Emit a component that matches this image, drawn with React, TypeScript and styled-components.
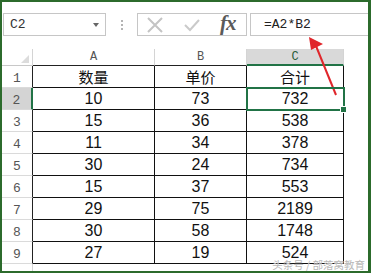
import React from "react";
import styled, { createGlobalStyle } from "styled-components";

const green = "#217346";
const frameGreen = "#2c6b2c";

const GlobalStyle = createGlobalStyle`
  html, body {
    margin: 0;
    padding: 0;
    background: #fff;
  }
  body {
    font-family: "Liberation Sans", "Noto Sans CJK SC", sans-serif;
  }
`;

const rows = [
  ["10", "73", "732"],
  ["15", "36", "538"],
  ["11", "34", "378"],
  ["30", "24", "734"],
  ["15", "37", "553"],
  ["29", "75", "2189"],
  ["30", "58", "1748"],
  ["27", "19", "524"]
];

export default function App() {
  return (
    <>
      <GlobalStyle />
      <Frame>
        <Toolbar>
          <NameBox>
            <span>C2</span>
            <DropArrow />
          </NameBox>
          <Dots>
            <i />
            <i />
            <i />
          </Dots>
          <ActionBox>
            <svg width="18" height="16" viewBox="0 0 18 16">
              <path d="M2 1 L16 15 M16 1 L2 15" stroke="#c4c4c4" strokeWidth="2" fill="none" />
            </svg>
            <svg width="16" height="14" viewBox="0 0 16 14">
              <path d="M1 7 L6 12 L15 2" stroke="#cacaca" strokeWidth="2" fill="none" />
            </svg>
            <Fx>fx</Fx>
          </ActionBox>
          <FormulaBox>=A2*B2</FormulaBox>
        </Toolbar>

        <Sheet>
          <Corner />
          <ColHead>A</ColHead>
          <ColHead>B</ColHead>
          <ColHead $active>C</ColHead>
          <Blank />

          <RowHead $table>1</RowHead>
          <Cell $cn>数量</Cell>
          <Cell $cn>单价</Cell>
          <Cell $cn>合计</Cell>
          <Blank />

          {rows.map((r, i) => (
            <React.Fragment key={i}>
              <RowHead $table $active={i === 0}>
                {i + 2}
              </RowHead>
              <Cell>{r[0]}</Cell>
              <Cell>{r[1]}</Cell>
              <Cell $selected={i === 0}>{r[2]}</Cell>
              <Blank />
            </React.Fragment>
          ))}

          <RowHead>10</RowHead>
          <Blank />
          <Blank />
          <Blank />
          <Blank />
        </Sheet>

        <Arrow width="371" height="273" viewBox="0 0 371 273">
          <line x1="336" y1="95" x2="316" y2="46" stroke="#e0262b" strokeWidth="2" />
          <polygon points="309,37 323,44 311,50" fill="#e0262b" />
        </Arrow>
        <Watermark>头条号 / 部落窝教育</Watermark>
      </Frame>
    </>
  );
}

const Frame = styled.div`
  position: relative;
  box-sizing: border-box;
  width: 371px;
  height: 273px;
  border-style: solid;
  border-color: ${frameGreen};
  border-width: 2px 3px 2px 2px;
  overflow: hidden;
  background: #fff;
`;

const Toolbar = styled.div`
  display: flex;
  align-items: stretch;
  height: 45px;
  box-sizing: border-box;
  padding: 11px 0 11px 1px;
`;

const NameBox = styled.div`
  box-sizing: border-box;
  width: 103px;
  border: 1px solid #c6c6c6;
  display: flex;
  align-items: center;
  justify-content: space-between;
  padding: 0 6px 0 6px;
  font-family: "Liberation Mono", monospace;
  font-size: 13px;
  color: #333;
`;

const DropArrow = styled.span`
  width: 0;
  height: 0;
  border-left: 3.5px solid transparent;
  border-right: 3.5px solid transparent;
  border-top: 4px solid #666;
  margin-top: 1px;
`;

const Dots = styled.div`
  width: 31px;
  display: flex;
  flex-direction: column;
  align-items: center;
  justify-content: center;
  gap: 2px;
  i {
    display: block;
    width: 2px;
    height: 2px;
    background: #b4b4b4;
  }
`;

const ActionBox = styled.div`
  box-sizing: border-box;
  width: 110px;
  border: 1px solid #c6c6c6;
  display: flex;
  align-items: center;
  gap: 0;
  padding-left: 8px;
  svg:nth-child(1) {
    margin-right: 20px;
  }
  svg:nth-child(2) {
    margin-right: 20px;
  }
`;

const Fx = styled.span`
  font-family: "Liberation Serif", serif;
  font-style: italic;
  font-weight: bold;
  font-size: 21px;
  color: #5a5a5a;
  letter-spacing: -1px;
  margin-top: -2px;
`;

const FormulaBox = styled.div`
  flex: 1;
  margin-left: 3px;
  box-sizing: border-box;
  border: 1px solid #c6c6c6;
  border-right: none;
  display: flex;
  align-items: center;
  padding-left: 13px;
  font-family: "Liberation Mono", monospace;
  font-size: 13px;
  color: #222;
`;

const Sheet = styled.div`
  display: grid;
  grid-template-columns: 31px 122px 92px 97px 1fr;
  grid-template-rows: 17px repeat(10, 22px);
  margin-top: 2px;
`;

const Corner = styled.div`
  position: relative;
  box-sizing: border-box;
  border-right: 1px solid #d4d4d4;
  border-bottom: 1px solid #c8c8c8;
  &::after {
    content: "";
    position: absolute;
    right: 3px;
    bottom: 2px;
    width: 0;
    height: 0;
    border-left: 8px solid transparent;
    border-bottom: 8px solid #dcdcdc;
  }
`;

const ColHead = styled.div<{ $active?: boolean }>`
  box-sizing: border-box;
  display: flex;
  align-items: flex-end;
  justify-content: center;
  border-right: 1px solid #d4d4d4;
  border-bottom: ${(p) => (p.$active ? `2px solid ${green}` : "1px solid #222")};
  background: ${(p) => (p.$active ? "#d9d9d9" : "#fff")};
  font-family: "Liberation Mono", monospace;
  font-size: 12px;
  line-height: 13px;
  color: ${(p) => (p.$active ? "#2b5d3a" : "#555")};
  padding-bottom: ${(p) => (p.$active ? "0" : "1px")};
`;

const RowHead = styled.div<{ $active?: boolean; $table?: boolean }>`
  box-sizing: border-box;
  display: flex;
  align-items: flex-end;
  justify-content: center;
  padding-bottom: 1px;
  border-right: ${(p) =>
    p.$active ? `2px solid ${green}` : p.$table ? "1px solid #222" : "1px solid #d4d4d4"};
  border-bottom: 1px solid #dadada;
  background: ${(p) => (p.$active ? "#d4d4d4" : "#fff")};
  font-family: "Liberation Mono", monospace;
  font-size: 13px;
  line-height: 14px;
  color: #555;
`;

const Cell = styled.div<{ $cn?: boolean; $selected?: boolean }>`
  position: relative;
  box-sizing: border-box;
  display: flex;
  align-items: center;
  justify-content: center;
  border-right: 1px solid #111;
  border-bottom: 1px solid #111;
  font-family: ${(p) =>
    p.$cn ? `"Noto Sans CJK SC", sans-serif` : `"Liberation Sans", sans-serif`};
  font-size: ${(p) => (p.$cn ? "15px" : "16px")};
  line-height: 22px;
  padding-top: ${(p) => (p.$cn ? "0" : "1px")};
  color: #111;
  ${(p) =>
    p.$selected &&
    `
    z-index: 1;
    outline: 2px solid ${green};
    outline-offset: -1px;
    &::after {
      content: "";
      position: absolute;
      right: -4px;
      bottom: -4px;
      width: 5px;
      height: 5px;
      background: ${green};
      border: 1px solid #fff;
    }
  `}
`;

const Blank = styled.div`
  background: #fff;
`;

const Arrow = styled.svg`
  position: absolute;
  left: -2px;
  top: -2px;
  pointer-events: none;
`;

const Watermark = styled.div`
  position: absolute;
  right: 3px;
  bottom: 0px;
  font-family: "Noto Sans CJK SC", sans-serif;
  font-size: 10.5px;
  line-height: 13px;
  color: #b8b8b8;
  text-shadow: 0 0 1px #fff;
`;
